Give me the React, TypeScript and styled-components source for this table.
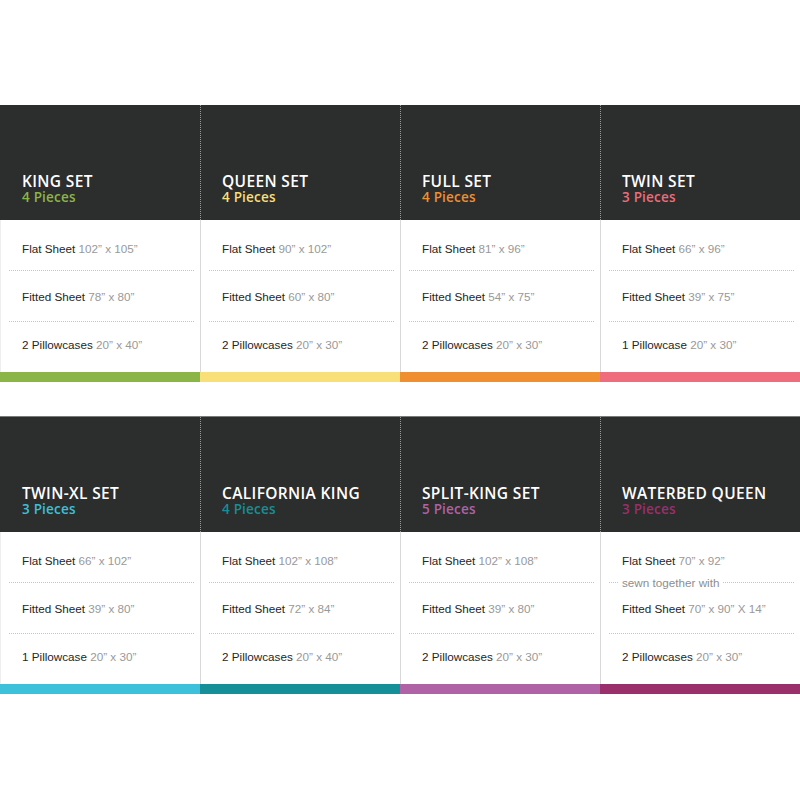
import React from 'react';
import styled, { createGlobalStyle } from 'styled-components';

const GlobalStyle = createGlobalStyle`
  body {
    margin: 0;
    background: #fff;
    font-family: "Liberation Sans", Arial, sans-serif;
  }
`;

type Item = { label: string; size: string };
type SetInfo = {
  name: string;
  pieces: string;
  accent: string;
  items: Item[];
  sewn?: boolean;
};

const topRow: SetInfo[] = [
  {
    name: 'KING SET', pieces: '4 Pieces', accent: '#8cb548',
    items: [
      { label: 'Flat Sheet', size: '102” x 105”' },
      { label: 'Fitted Sheet', size: '78” x 80”' },
      { label: '2 Pillowcases', size: '20” x 40”' },
    ],
  },
  {
    name: 'QUEEN SET', pieces: '4 Pieces', accent: '#f8df78',
    items: [
      { label: 'Flat Sheet', size: '90” x 102”' },
      { label: 'Fitted Sheet', size: '60” x 80”' },
      { label: '2 Pillowcases', size: '20” x 30”' },
    ],
  },
  {
    name: 'FULL SET', pieces: '4 Pieces', accent: '#f08f30',
    items: [
      { label: 'Flat Sheet', size: '81” x 96”' },
      { label: 'Fitted Sheet', size: '54” x 75”' },
      { label: '2 Pillowcases', size: '20” x 30”' },
    ],
  },
  {
    name: 'TWIN SET', pieces: '3 Pieces', accent: '#ee6c7b',
    items: [
      { label: 'Flat Sheet', size: '66” x 96”' },
      { label: 'Fitted Sheet', size: '39” x 75”' },
      { label: '1 Pillowcase', size: '20” x 30”' },
    ],
  },
];

const bottomRow: SetInfo[] = [
  {
    name: 'TWIN-XL SET', pieces: '3 Pieces', accent: '#3dc0d9',
    items: [
      { label: 'Flat Sheet', size: '66” x 102”' },
      { label: 'Fitted Sheet', size: '39” x 80”' },
      { label: '1 Pillowcase', size: '20” x 30”' },
    ],
  },
  {
    name: 'CALIFORNIA KING', pieces: '4 Pieces', accent: '#178f98',
    items: [
      { label: 'Flat Sheet', size: '102” x 108”' },
      { label: 'Fitted Sheet', size: '72” x 84”' },
      { label: '2 Pillowcases', size: '20” x 40”' },
    ],
  },
  {
    name: 'SPLIT-KING SET', pieces: '5 Pieces', accent: '#b062a6',
    items: [
      { label: 'Flat Sheet', size: '102” x 108”' },
      { label: 'Fitted Sheet', size: '39” x 80”' },
      { label: '2 Pillowcases', size: '20” x 30”' },
    ],
  },
  {
    name: 'WATERBED QUEEN', pieces: '3 Pieces', accent: '#9b2f6b', sewn: true,
    items: [
      { label: 'Flat Sheet', size: '70” x 92”' },
      { label: 'Fitted Sheet', size: '70” x 90” X 14”' },
      { label: '2 Pillowcases', size: '20” x 30”' },
    ],
  },
];

const Page = styled.main`
  display: flex;
  flex-direction: column;
  gap: 34px;
  padding-top: 105px;
`;

const Grid = styled.section<{ $topLine?: boolean }>`
  display: grid;
  grid-template-columns: repeat(4, 200px);
  border-top: ${p => (p.$topLine ? '1px solid #7a7a7a' : 'none')};
`;

const Card = styled.article`
  display: flex;
  flex-direction: column;
`;

const Header = styled.header<{ $first: boolean }>`
  box-sizing: border-box;
  height: 115px;
  background: #2c2d2d;
  display: flex;
  flex-direction: column;
  justify-content: flex-end;
  padding: 0 0 15px ${p => (p.$first ? '22px' : '21px')};
  border-left: ${p => (p.$first ? 'none' : '1px dotted #9a9a9a')};
`;

const Title = styled.h2`
  margin: 0;
  font-family: "Open Sans", sans-serif;
  font-weight: 600;
  font-size: 15.5px;
  line-height: 16px;
  letter-spacing: 0.35px;
  color: #fff;
`;

const Pieces = styled.div<{ $accent: string }>`
  font-family: "Open Sans", sans-serif;
  font-weight: 600;
  font-size: 13.5px;
  line-height: 16px;
  letter-spacing: 0.2px;
  color: ${p => p.$accent};
`;

const Body = styled.div<{ $first: boolean }>`
  height: 152px;
  display: flex;
  flex-direction: column;
  border-left: 1px solid ${p => (p.$first ? '#eeeeee' : '#d8d8d8')};
`;

const Row = styled.div`
  box-sizing: border-box;
  height: 50px;
  display: flex;
  align-items: center;
  padding-left: 21px;
  font-size: 11.7px;
  color: #262626;
  white-space: nowrap;

  &:first-child {
    padding-top: 6px;
  }
  &:last-child {
    padding-bottom: 5px;
  }
`;

const Size = styled.span`
  color: #999;
`;

const Divider = styled.div`
  margin: 0 6px 0 8px;
  border-top: 1px dotted #c4c4c4;
`;

const SewnDivider = styled.div`
  height: 1px;
  margin: 0 6px 0 8px;
  display: flex;
  align-items: center;
  gap: 4px;
  font-size: 11.7px;
  color: #8e8e8e;
  white-space: nowrap;

  &::before,
  &::after {
    content: '';
    border-top: 1px dotted #c4c4c4;
  }
  &::before {
    width: 9px;
  }
  &::after {
    flex: 1;
  }
`;

const Bar = styled.div<{ $accent: string }>`
  height: 10px;
  background: ${p => p.$accent};
`;

const SetCard: React.FC<{ info: SetInfo; first: boolean }> = ({ info, first }) => (
  <Card>
    <Header $first={first}>
      <Title>{info.name}</Title>
      <Pieces $accent={info.accent}>{info.pieces}</Pieces>
    </Header>
    <Body $first={first}>
      {info.items.map((item, i) => (
        <React.Fragment key={item.label}>
          {i === 1 && (info.sewn ? <SewnDivider>sewn together with</SewnDivider> : <Divider />)}
          {i === 2 && <Divider />}
          <Row>
            {item.label}&nbsp;<Size>{item.size}</Size>
          </Row>
        </React.Fragment>
      ))}
    </Body>
    <Bar $accent={info.accent} />
  </Card>
);

export default function App() {
  return (
    <>
      <GlobalStyle />
      <Page>
        <Grid>
          {topRow.map((s, i) => <SetCard key={s.name} info={s} first={i === 0} />)}
        </Grid>
        <Grid $topLine>
          {bottomRow.map((s, i) => <SetCard key={s.name} info={s} first={i === 0} />)}
        </Grid>
      </Page>
    </>
  );
}
